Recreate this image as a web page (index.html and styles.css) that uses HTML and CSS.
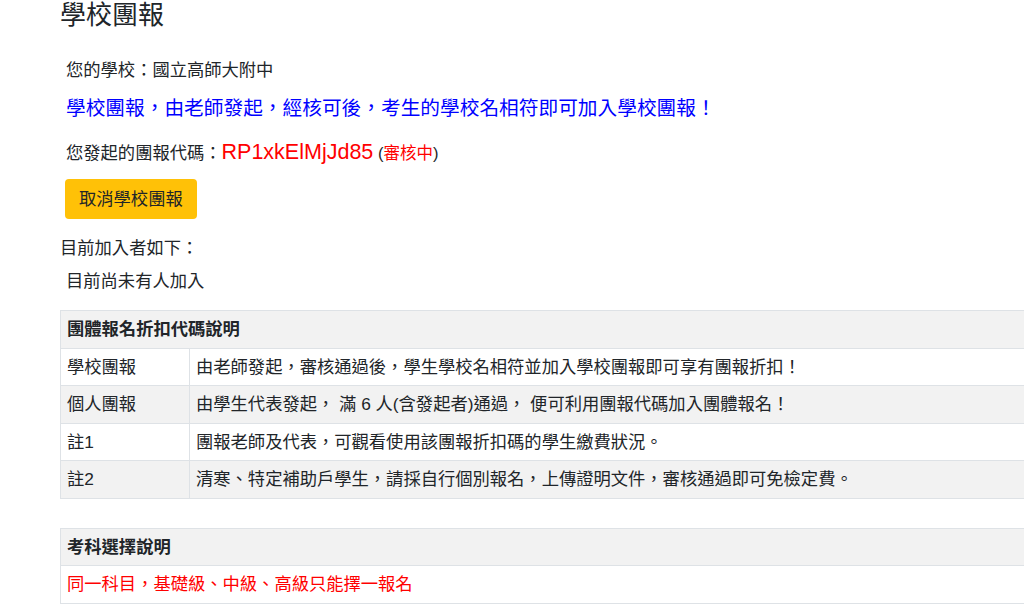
FILE: index.html
```html
<!DOCTYPE html>
<html lang="zh-Hant">
<head>
  <meta charset="UTF-8" />
  <meta name="viewport" content="width=device-width, initial-scale=1" />
  <title>學校團報</title>
  <link rel="stylesheet" href="styles.css">
</head>
<body>
  <main class="page">
    <h3 class="page-title">學校團報</h3>

    <div class="info">
      <p class="info-line">您的學校：國立高師大附中</p>
      <p class="info-notice">學校團報，由老師發起，經核可後，考生的學校名相符即可加入學校團報！</p>
      <p class="info-code">您發起的團報代碼：<span class="code">RP1xkElMjJd85</span> <span class="status">(<span class="status-text">審核中</span>)</span></p>
      <button class="btn-cancel" type="button">取消學校團報</button>
    </div>

    <p class="members-title">目前加入者如下：</p>
    <p class="members-empty">目前尚未有人加入</p>

    <!-- 折扣代碼說明 -->
    <table class="note-table">
      <tr class="head">
        <th colspan="2">團體報名折扣代碼說明</th>
      </tr>
      <tr>
        <td class="label">學校團報</td>
        <td>由老師發起，審核通過後，學生學校名相符並加入學校團報即可享有團報折扣！</td>
      </tr>
      <tr class="alt">
        <td class="label">個人團報</td>
        <td>由學生代表發起， 滿 6 人(含發起者)通過， 便可利用團報代碼加入團體報名！</td>
      </tr>
      <tr>
        <td class="label">註1</td>
        <td>團報老師及代表，可觀看使用該團報折扣碼的學生繳費狀況。</td>
      </tr>
      <tr class="alt">
        <td class="label">註2</td>
        <td>清寒、特定補助戶學生，請採自行個別報名，上傳證明文件，審核通過即可免檢定費。</td>
      </tr>
    </table>

    <!-- 考科選擇說明 -->
    <table class="note-table second">
      <tr class="head">
        <th>考科選擇說明</th>
      </tr>
      <tr>
        <td class="warn">同一科目，基礎級、中級、高級只能擇一報名</td>
      </tr>
    </table>
  </main>
</body>
</html>
```

FILE: styles.css
```css
html, body {
  margin: 0;
  padding: 0;
  overflow-x: hidden;
}
body {
  font-family: "Liberation Sans", "Noto Sans CJK TC", sans-serif;
  font-size: 17.3px;
  line-height: 26px;
  color: #212529;
  background: #fff;
}
.page {
  padding-left: 60px;
}
.page-title {
  margin: 0;
  font-size: 26px;
  line-height: 31px;
  font-weight: normal;
}
.info {
  padding-left: 6px;
  margin-top: 26px;
}
.info p {
  margin: 0;
}
.info-notice {
  margin-top: 10px !important;
  font-size: 19.7px;
  line-height: 30px;
  color: #0000ff;
}
.info-code {
  margin-top: 14px !important;
  line-height: 30px;
}
.code {
  color: #ff0000;
  font-size: 21.5px;
}
.status {
  font-size: 16.5px;
}
.status-text {
  color: #ff0000;
}
.btn-cancel {
  display: block;
  margin: 11px 0 0 -1px;
  padding: 7px 14px;
  font-family: inherit;
  font-size: 17.3px;
  line-height: 26px;
  color: #212529;
  background: #ffc107;
  border: none;
  border-radius: 4px;
  cursor: pointer;
}
.members-title {
  margin: 16px 0 0 0;
}
.members-empty {
  margin: 7px 0 0 6px;
}
/* 說明表格 */
.note-table {
  width: 1000px;
  margin-top: 16px;
  border-collapse: collapse;
  border: 1px solid #dee2e6;
}
.note-table.second {
  margin-top: 29px;
}
.note-table th,
.note-table td {
  padding: 5px 6px;
  border: 1px solid #dee2e6;
  text-align: left;
  line-height: 26.5px;
  vertical-align: middle;
}
.note-table th {
  font-weight: bold;
}
.note-table .head,
.note-table .alt {
  background: #f2f2f2;
}
.note-table .label {
  width: 116px;
}
.warn {
  color: #ff0000;
}
```
